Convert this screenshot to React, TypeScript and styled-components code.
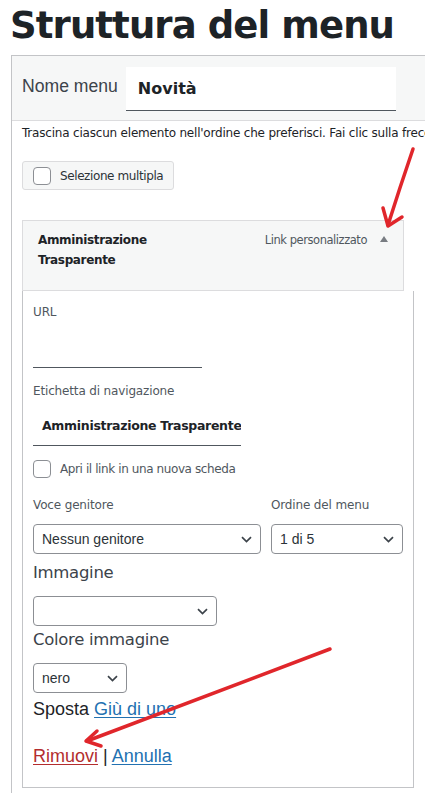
import * as React from 'react';
import styled, { createGlobalStyle } from 'styled-components';

const GlobalStyle = createGlobalStyle`
   html, body {
      margin: 0;
      padding: 0;
      background: #fff;
      overflow: hidden;
   }
   body {
      font-family: "DejaVu Sans", sans-serif;
      color: #1d2327;
   }
`;

const Page = styled.div`
   position: relative;
   width: 425px;
   height: 793px;
   overflow: hidden;
`;

const Title = styled.h1`
   margin: 0;
   padding: 4px 0 0 10px;
   height: 51px;
   box-sizing: border-box;
   font-family: "DejaVu Sans", sans-serif;
   font-weight: 700;
   font-size: 37px;
   letter-spacing: -0.9px;
   line-height: 44px;
   color: #1d2327;
`;

const Frame = styled.div`
   margin: 4px 0 0 11px;
   width: 460px;
   border: 1px solid #c3c4c7;
   border-bottom: none;
   min-height: 760px;
`;

const NameBar = styled.div`
   display: flex;
   align-items: center;
   gap: 8px;
   height: 64px;
   padding: 0 10px;
   background: #f6f7f7;
   border-bottom: 1px solid #dcdcde;
`;

const NameLabel = styled.span`
   font-family: "Liberation Sans", sans-serif;
   font-size: 17.6px;
   color: #3c434a;
   margin-bottom: 3px;
`;

const NameInput = styled.div`
   width: 270px;
   height: 44px;
   box-sizing: border-box;
   padding: 0 12px;
   display: flex;
   align-items: center;
   background: #fff;
   border-bottom: 1px solid #50575e;
   font-family: "DejaVu Sans", sans-serif;
   font-weight: 700;
   font-size: 16px;
   color: #1d2327;
   margin-top: 2px;
`;

const Body = styled.div`
   padding: 4px 0 0 10px;
`;

const Hint = styled.p`
   margin: 0;
   font-size: 12px;
   letter-spacing: -0.2px;
   line-height: 16px;
   white-space: nowrap;
   color: #1d2327;
`;

const BulkButton = styled.div`
   display: inline-flex;
   align-items: center;
   gap: 9px;
   margin-top: 20px;
   height: 29px;
   box-sizing: border-box;
   padding: 0 10px;
   background: #f6f7f7;
   border: 1px solid #dcdcde;
   border-radius: 3px;
   font-size: 12px;
   letter-spacing: -0.4px;
   color: #2c3338;
`;

const Check = styled.span`
   width: 18px;
   height: 18px;
   box-sizing: border-box;
   border: 1px solid #8c8f94;
   border-radius: 4px;
   background: #fff;
   flex: none;
`;

const ItemBar = styled.div`
   margin-top: 30px;
   width: 382px;
   height: 71px;
   box-sizing: border-box;
   padding: 9px 15px 0 15px;
   display: flex;
   justify-content: space-between;
   align-items: flex-start;
   background: #f6f7f7;
   border: 1px solid #dcdcde;
`;

const ItemTitle = styled.div`
   font-weight: 700;
   font-size: 12px;
   letter-spacing: -0.35px;
   line-height: 20px;
   color: #1d2327;
   width: 130px;
`;

const ItemMeta = styled.div`
   display: flex;
   align-items: center;
   gap: 13px;
   font-size: 11.5px;
   letter-spacing: -0.45px;
   line-height: 20px;
   color: #50575e;
`;

const Caret = styled.span`
   width: 0;
   height: 0;
   border-left: 4px solid transparent;
   border-right: 4px solid transparent;
   border-bottom: 6px solid #787c82;
   margin-top: -2px;
`;

const Settings = styled.div`
   width: 392px;
   height: 497px;
   box-sizing: border-box;
   padding: 12px 10px 0 10px;
   border: 1px solid #c3c4c7;
   border-top: none;
`;

const FieldLabel = styled.div`
   font-size: 12px;
   letter-spacing: -0.15px;
   line-height: 18px;
   color: #50575e;
`;

const LineInput = styled.div<{ $h: number; $w: number }>`
   width: ${(p) => p.$w}px;
   height: ${(p) => p.$h}px;
   box-sizing: border-box;
   padding: 0 9px;
   display: flex;
   align-items: center;
   overflow: hidden;
   white-space: nowrap;
   border-bottom: 1px solid #50575e;
   font-weight: 700;
   font-size: 12.5px;
   letter-spacing: -0.3px;
   color: #1d2327;
`;

const Field = styled.div<{ $gap: number; $mt: number }>`
   display: flex;
   flex-direction: column;
   gap: ${(p) => p.$gap}px;
   margin-top: ${(p) => p.$mt}px;
`;

const CheckRow = styled.label`
   display: flex;
   align-items: center;
   gap: 9px;
   margin-top: 14px;
   font-size: 12px;
   letter-spacing: -0.4px;
   color: #50575e;
`;

const TwoCols = styled.div`
   display: flex;
   gap: 10px;
   margin-top: 18px;
`;

const Col = styled.div<{ $w: number }>`
   width: ${(p) => p.$w}px;
   display: flex;
   flex-direction: column;
   gap: 10px;
`;

const Select = styled.div<{ $w: number }>`
   width: ${(p) => p.$w}px;
   height: 30px;
   box-sizing: border-box;
   padding: 0 8px;
   display: flex;
   align-items: center;
   justify-content: space-between;
   border: 1px solid #8c8f94;
   border-radius: 4px;
   background: #fff;
   font-family: "Liberation Sans", sans-serif;
   font-size: 14px;
   color: #2c3338;
`;

const SectionTitle = styled.div<{ $mt: number }>`
   font-size: 16.5px;
   letter-spacing: -0.3px;
   line-height: 22px;
   color: #3c434a;
   margin: ${(p) => p.$mt}px 0 12px;
`;

const MoveRow = styled.div`
   font-family: "Liberation Sans", sans-serif;
   font-size: 18px;
   line-height: 22px;
   color: #1d2327;
   margin-top: 5px;
`;

const Link = styled.a<{ $danger?: boolean }>`
   color: ${(p) => (p.$danger ? '#b32d2e' : '#2271b1')};
   text-decoration: underline;
   text-underline-offset: 2px;
   cursor: pointer;
`;

const Actions = styled.div`
   font-family: "Liberation Sans", sans-serif;
   font-size: 18px;
   line-height: 22px;
   color: #1d2327;
   margin-top: 25px;
`;

const Arrows = styled.svg`
   position: absolute;
   left: 0;
   top: 0;
   pointer-events: none;
`;

const Chevron = () => (
   <svg width="11" height="7" viewBox="0 0 11 7" fill="none">
      <path d="M1 1.2 L5.5 5.5 L10 1.2" stroke="#3c434a" strokeWidth="1.7" />
   </svg>
);

export default function App() {
   return (
      <Page>
         <GlobalStyle />
         <Title>Struttura del menu</Title>
         <Frame>
            <NameBar>
               <NameLabel>Nome menu</NameLabel>
               <NameInput>Novità</NameInput>
            </NameBar>
            <Body>
               <Hint>Trascina ciascun elemento nell'ordine che preferisci. Fai clic sulla freccia a destra dell'elemento per visualizzare altre opzioni di configurazione.</Hint>
               <BulkButton>
                  <Check />
                  Selezione multipla
               </BulkButton>
               <ItemBar>
                  <ItemTitle>Amministrazione Trasparente</ItemTitle>
                  <ItemMeta>
                     Link personalizzato
                     <Caret />
                  </ItemMeta>
               </ItemBar>
               <Settings>
                  <Field $gap={17} $mt={0}>
                     <FieldLabel>URL</FieldLabel>
                     <LineInput $w={169} $h={30} />
                  </Field>
                  <Field $gap={6} $mt={14}>
                     <FieldLabel>Etichetta di navigazione</FieldLabel>
                     <LineInput $w={208} $h={40}>Amministrazione Trasparente</LineInput>
                  </Field>
                  <CheckRow>
                     <Check />
                     Apri il link in una nuova scheda
                  </CheckRow>
                  <TwoCols>
                     <Col $w={228}>
                        <FieldLabel>Voce genitore</FieldLabel>
                        <Select $w={228}>
                           Nessun genitore
                           <Chevron />
                        </Select>
                     </Col>
                     <Col $w={132}>
                        <FieldLabel>Ordine del menu</FieldLabel>
                        <Select $w={132}>
                           1 di 5
                           <Chevron />
                        </Select>
                     </Col>
                  </TwoCols>
                  <SectionTitle $mt={8}>Immagine</SectionTitle>
                  <Select $w={184}>
                     <span />
                     <Chevron />
                  </Select>
                  <SectionTitle $mt={3}>Colore immagine</SectionTitle>
                  <Select $w={94}>
                     nero
                     <Chevron />
                  </Select>
                  <MoveRow>
                     Sposta <Link>Giù di uno</Link>
                  </MoveRow>
                  <Actions>
                     <Link $danger>Rimuovi</Link> | <Link>Annulla</Link>
                  </Actions>
               </Settings>
            </Body>
         </Frame>
         <Arrows width="425" height="793" viewBox="0 0 425 793">
            <g stroke="#e0262b" strokeWidth="3.5" strokeLinecap="round" strokeLinejoin="round" fill="none">
               <path d="M413 149 Q400 187 388 225" />
               <path d="M383 208 L388 226 L402 217" />
               <path d="M330 649 Q210 695 87 741" />
               <path d="M97 731 L86 741 L101 746" />
            </g>
         </Arrows>
      </Page>
   );
}
